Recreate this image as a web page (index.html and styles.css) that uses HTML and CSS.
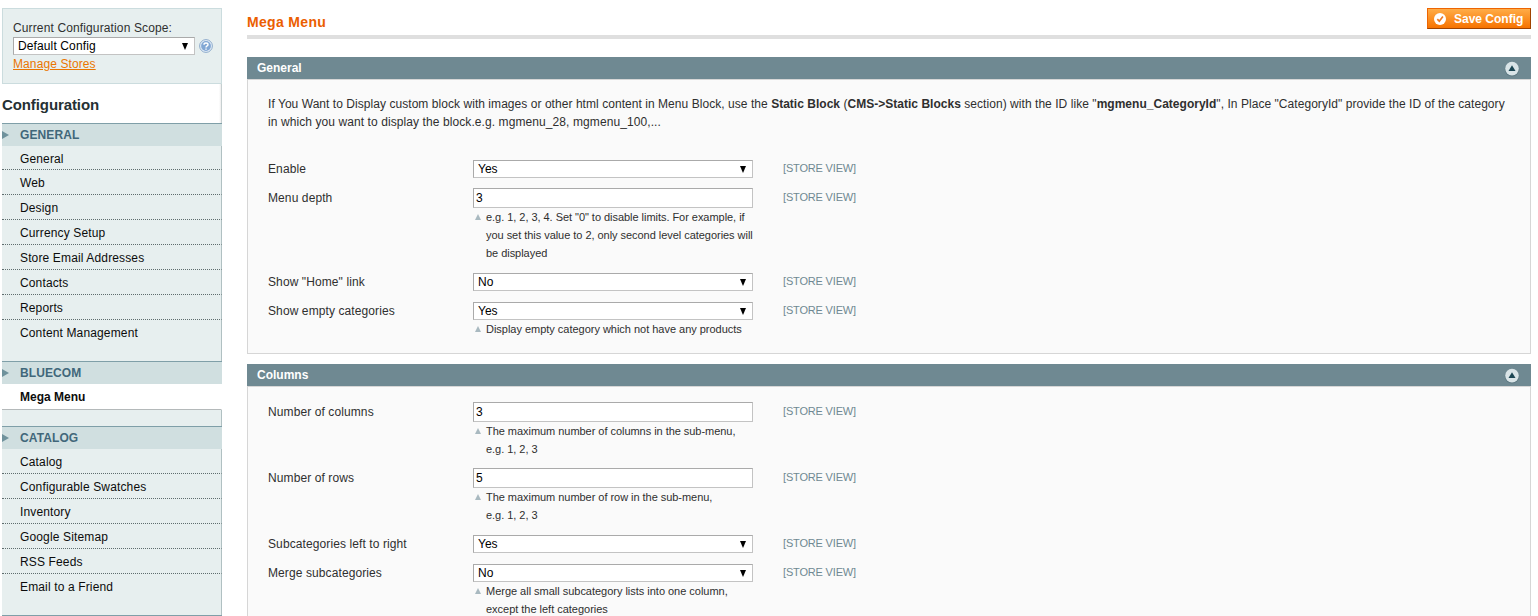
FILE: index.html
```html
<!DOCTYPE html>
<html lang="en">
<head>
<meta charset="utf-8">
<title>Mega Menu / Configuration</title>
<link rel="stylesheet" href="styles.css">
</head>
<body>
<div class="page">
  <aside class="sidebar">
    <div class="scope">
      <div class="scope-label">Current Configuration Scope:</div>
      <div class="scope-row">
        <div class="select scope-select"><span>Default Config</span><i class="arrow"></i></div>
        <svg class="help" viewBox="0 0 14 14"><circle cx="7" cy="7" r="6.4" fill="#e4eef8" stroke="#8eabcb"/><circle cx="7" cy="7" r="4.9" fill="#82a7d4"/><path d="M5 5.7C5 3.5 9 3.5 9 5.7C9 7 7 6.8 7 8.4M7 9.4V10.8" fill="none" stroke="#fff" stroke-width="1.4"/></svg>
      </div>
      <a class="manage">Manage Stores</a>
    </div>
    <div class="nav-wrap">
      <h3 class="nav-title">Configuration</h3>
    </div>
    <nav>
      <div class="group">
        <div class="group-title">GENERAL</div>
        <div class="item item-short">General</div>
        <div class="item">Web</div>
        <div class="item">Design</div>
        <div class="item">Currency Setup</div>
        <div class="item">Store Email Addresses</div>
        <div class="item">Contacts</div>
        <div class="item">Reports</div>
        <div class="item item-last">Content Management</div>
      </div>
      <div class="group group-current">
        <div class="group-title">BLUECOM</div>
        <div class="item item-active">Mega Menu</div>
      </div>
      <div class="group">
        <div class="group-title">CATALOG</div>
        <div class="item">Catalog</div>
        <div class="item">Configurable Swatches</div>
        <div class="item">Inventory</div>
        <div class="item">Google Sitemap</div>
        <div class="item">RSS Feeds</div>
        <div class="item item-last">Email to a Friend</div>
      </div>
      <div class="group-end"></div>
    </nav>
  </aside>

  <main class="main">
    <header class="head">
      <h1 class="title">Mega Menu</h1>
      <div class="save">
        <svg class="check" viewBox="0 0 12 12"><circle cx="6" cy="6" r="6" fill="#fff"/><path d="M3.3 6.2L5.3 8.2L8.9 3.6" fill="none" stroke="#ee7a25" stroke-width="1.7"/></svg>
        <span>Save Config</span>
      </div>
    </header>

    <section class="panel">
      <div class="panel-head"><span>General</span>
        <svg class="toggle" viewBox="0 0 16 16"><circle cx="8" cy="8.4" r="7.2" fill="#5d7982"/><circle cx="8" cy="7.6" r="6.8" fill="#d9e4e7"/><path d="M8 4.2L11.5 10H4.5Z" fill="#1c4653"/></svg>
      </div>
      <div class="panel-body general">
        <p class="intro"><span class="line line1">If You Want to Display custom block with images or other html content in Menu Block, use the <b>Static Block</b> (<b>CMS-&gt;Static Blocks</b> section) with the ID like "<b>mgmenu_CategoryId</b>", In Place "CategoryId" provide the ID of the category</span><span class="line line2">in which you want to display the block.e.g. mgmenu_28, mgmenu_100,...</span></p>
        <div class="row"><label class="label">Enable</label><div class="field"><div class="select"><span>Yes</span><i class="arrow"></i></div></div><span class="view">[STORE VIEW]</span></div>
        <div class="row"><label class="label">Menu depth</label><div class="field"><div class="input">3</div><div class="note">e.g. 1, 2, 3, 4. Set "0" to disable limits. For example, if<br>you set this value to 2, only second level categories will<br>be displayed</div></div><span class="view">[STORE VIEW]</span></div>
        <div class="row"><label class="label">Show "Home" link</label><div class="field"><div class="select"><span>No</span><i class="arrow"></i></div></div><span class="view">[STORE VIEW]</span></div>
        <div class="row"><label class="label">Show empty categories</label><div class="field"><div class="select"><span>Yes</span><i class="arrow"></i></div><div class="note">Display empty category which not have any products</div></div><span class="view">[STORE VIEW]</span></div>
      </div>
    </section>

    <section class="panel">
      <div class="panel-head"><span>Columns</span>
        <svg class="toggle" viewBox="0 0 16 16"><circle cx="8" cy="8.4" r="7.2" fill="#5d7982"/><circle cx="8" cy="7.6" r="6.8" fill="#d9e4e7"/><path d="M8 4.2L11.5 10H4.5Z" fill="#1c4653"/></svg>
      </div>
      <div class="panel-body columns">
        <div class="row"><label class="label">Number of columns</label><div class="field"><div class="input">3</div><div class="note">The maximum number of columns in the sub-menu,<br>e.g. 1, 2, 3</div></div><span class="view">[STORE VIEW]</span></div>
        <div class="row"><label class="label">Number of rows</label><div class="field"><div class="input">5</div><div class="note">The maximum number of row in the sub-menu,<br>e.g. 1, 2, 3</div></div><span class="view">[STORE VIEW]</span></div>
        <div class="row"><label class="label">Subcategories left to right</label><div class="field"><div class="select"><span>Yes</span><i class="arrow"></i></div></div><span class="view">[STORE VIEW]</span></div>
        <div class="row"><label class="label">Merge subcategories</label><div class="field"><div class="select"><span>No</span><i class="arrow"></i></div><div class="note">Merge all small subcategory lists into one column,<br>except the left categories</div></div><span class="view">[STORE VIEW]</span></div>
      </div>
    </section>
  </main>
</div>
</body>
</html>
```
FILE: styles.css
```css
* { box-sizing: border-box; }
html, body { height: 100%; overflow: hidden; }
body { margin: 0; background: #fff; color: #2f2f2f; font: 12px/18px "Liberation Sans", Arial, sans-serif; }
h1, h3, p { margin: 0; }

.page { display: flex; gap: 25px; height: 616px; padding: 8px 7px 0 2px; overflow: hidden; }
.sidebar { width: 220px; flex: none; }
.main { flex: 1; min-width: 0; }

.scope { height: 76px; padding: 10px 0 0 10px; border: 1px solid #cbdcde; background: #e7efef; }
.scope-label { letter-spacing: 0.13px; }
.scope-row { display: flex; align-items: center; gap: 4px; height: 18px; }
.scope-row .scope-select { width: 182px; margin: 0; letter-spacing: 0.12px; }
.help { width: 14px; height: 14px; }
.manage { display: block; color: #ea7601; text-decoration: underline; letter-spacing: 0.1px; }

.nav-wrap { height: 39px; padding-top: 12px; border-right: 1px solid #c6cfd0; background: linear-gradient(to left, #ececec, #fff 2px); }
.nav-title { color: #253033; font-size: 15px; line-height: 18px; letter-spacing: -0.1px; }
.group-title { position: relative; height: 23px; padding-left: 18px; border-top: 1px solid #7f9fa8; background: #d0dfe0; color: #41677a; font-weight: bold; line-height: 22px; letter-spacing: 0.1px; }
.group-title::before { content: ""; position: absolute; left: 0; top: 7px; border: 4px solid transparent; border-left: 7px solid #6f929c; border-right: 0; }
.item { height: 25px; padding-left: 18px; border-right: 1px solid #b0c0c2; border-bottom: 1px dotted #5f6d6e; background: #e7efef; color: #0c0c0c; line-height: 26px; letter-spacing: 0.14px; }
.item-short { height: 24px; }
.item-last { height: 41px; border-bottom: 0; }
.item-active { height: 26px; background: #fff; border-right-color: #fff; border-bottom: 1px solid #b4b9ba; font-weight: bold; letter-spacing: 0; }
.group-current { height: 65px; border-right: 1px solid #b0c0c2; background: #e7efef; }
.group-current > div { width: 220px; }
.group-end { height: 1px; background: #7f9fa8; }

.head { display: flex; justify-content: space-between; height: 31px; border-bottom: 4px solid #dfdfdf; }
.title { padding-top: 4px; color: #eb5e00; font-size: 14px; line-height: 20px; letter-spacing: 0.33px; }
.save { display: flex; align-items: center; gap: 8px; width: 104px; height: 21px; padding-left: 6px; border: 1px solid; border-color: #ed6502 #a04300 #a04300 #ed6502; background: linear-gradient(#ffac47, #f77300); color: #fff; font-weight: bold; white-space: nowrap; }
.check { width: 12px; height: 12px; flex: none; }

.panel { margin-top: 18px; }
.panel + .panel { margin-top: 10px; }
.panel-head { display: flex; align-items: center; justify-content: space-between; height: 22px; padding: 0 11px 0 10px; background: #6f8992; color: #fff; font-weight: bold; }
.toggle { width: 16px; height: 16px; margin-top: 2px; }
.panel-body { padding: 15px 20px 0; border: 1px solid #d6d6d6; background: #fafafa; }
.general { height: 275px; }
.columns { height: 260px; }
.intro { margin-bottom: 28px; }
.line { display: block; white-space: nowrap; }
.line1 { letter-spacing: 0.05px; }
.line1 b { letter-spacing: 0.02px; }
.line2 { letter-spacing: 0.087px; }
.row { display: flex; padding-bottom: 9px; }
.label { width: 205px; line-height: 20px; letter-spacing: 0.1px; }
.field { width: 280px; margin-right: 30px; }
.select, .input { border: 1px solid; border-color: #aaa #c3c3c3 #c3c3c3 #aaa; background: #fff; color: #000; }
.select { display: flex; align-items: center; justify-content: space-between; height: 18px; margin: 1px 0; padding: 0 6px 0 4px; line-height: 16px; }
.arrow { border: 3.5px solid transparent; border-top: 7px solid #000; border-bottom: 0; }
.input { height: 20px; padding-left: 2px; line-height: 19px; }
.note { position: relative; margin-bottom: 1px; padding-left: 13px; font-size: 11px; line-height: 18px; letter-spacing: -0.04px; white-space: nowrap; }
.select + .note { margin: -1px 0 2px; letter-spacing: -0.02px; }
.note::before { content: ""; position: absolute; left: 2px; top: 6px; border: 3.5px solid transparent; border-bottom: 6px solid #a9b9c0; border-top: 0; }
.view { color: #6f8992; font-size: 11px; line-height: 18px; letter-spacing: -0.17px; }
```
